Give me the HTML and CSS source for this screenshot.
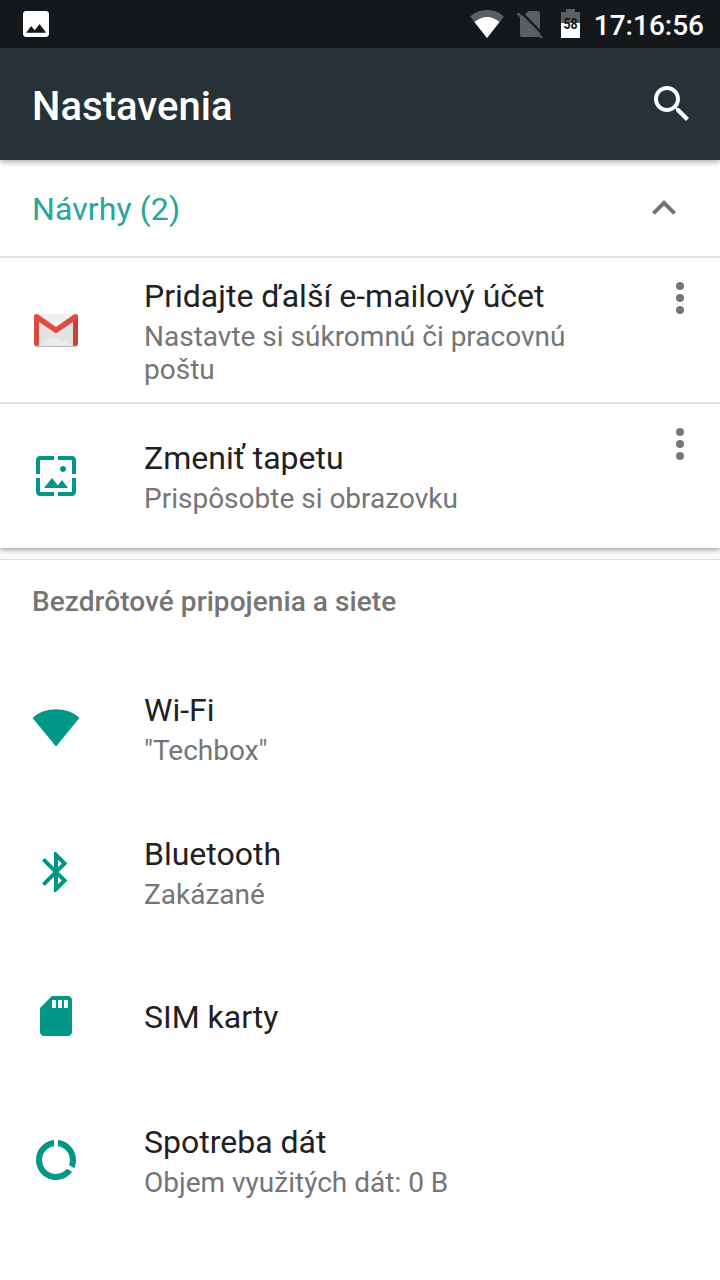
FILE: index.html
```html
<!DOCTYPE html>
<html lang="sk">
<head>
    <meta charset="UTF-8">
    <meta name="viewport" content="width=device-width, initial-scale=1.0">
    <title>Nastavenia</title>
    <link rel="stylesheet" href="styles.css">
</head>
<body>
    <div class="status-bar">
        <svg class="status-image" viewBox="3 3 18 18"><path fill="#fff" d="M21 19V5c0-1.100-.9-2-2-2H5c-1.100 0-2 .9-2 2v14c0 1.100.9 2 2 2h14c1.100 0 2-.9 2-2zM8.600 13.400l2.500 3 3.400-4.400 4.500 6H5.200z"/></svg>
        <div class="status-icons">
            <svg width="34" height="28" viewBox="0 0 34 28">
                <path fill="#5c5e60" d="M17 28L0 6.500C5 2 11 0 17 0s12 2 17 6.500z"/>
                <path fill="#fff" d="M17 28L4.500 12C8 9 12.500 7 17 7s9 2 12.500 5z"/>
            </svg>
            <svg class="status-sim" width="26" height="28" viewBox="0 0 26 28">
                <path fill="#5c5e60" d="M11.500 0H21Q23 0 23 2v22Q23 26 21 26H5Q3 26 3 24V4.500L7.500 4z"/>
                <path stroke="#14181b" stroke-width="2.300" d="M2 -1L28 25.300"/>
                <path stroke="#5c5e60" stroke-width="2.300" d="M.8 2.300L25 27"/>
            </svg>
            <div class="battery">
                <svg width="19" height="29" viewBox="0 0 19 29">
                    <path fill="#5c5e60" d="M5 0h9v3h5v11H0V3h5z"/>
                    <path fill="#fff" d="M0 14h19v15H0z"/>
                </svg>
                <span>58</span>
            </div>
        </div>
        <span class="clock">17:16:56</span>
    </div>

    <header class="app-bar">
        <h1>Nastavenia</h1>
        <svg class="icon" viewBox="0 0 24 24"><path fill="#fff" d="M15.500 14h-.79l-.28-.27C15.410 12.590 16 11.110 16 9.500 16 5.910 13.090 3 9.500 3S3 5.910 3 9.500 5.910 16 9.500 16c1.610 0 3.090-.59 4.230-1.570l.27.28v.79l5 4.990L20.490 19l-4.990-5zm-6 0C7.010 14 5 11.990 5 9.500S7.010 5 9.500 5 14 7.010 14 9.500 11.990 14 9.500 14z"/></svg>
    </header>

    <section class="suggestions">
        <div class="suggestions-header">
            <h2>Návrhy (2)</h2>
            <svg class="icon gray" viewBox="0 0 24 24"><path d="M12 8l-6 6 1.410 1.410L12 10.830l4.590 4.580L18 14z"/></svg>
        </div>
        <div class="item bordered">
            <svg class="icon" viewBox="0 0 48 48">
                <path fill="#b8b8b8" d="M3 38h42v1.500q0 1.500-2 1.500H4.500q-1.500 0-1.500-1.500z"/>
                <path fill="#f0f0f0" d="M4 8h40v31.800H4z"/>
                <path fill="#e2e2e2" d="M7 17l17 12 17-12v22.800H7z"/>
                <path fill="#ececec" d="M7 39.800l12-9 5 1 17 8z"/>
                <path fill="#d54b3d" d="M2 10h5v29.800H4q-2 0-2-2z"/>
                <path fill="#c94132" d="M41 10h5v27.800q0 2-2 2h-3z"/>
                <path fill="#e04d40" d="M2 10.500Q2 8 4.500 8q1 0 2 .8L24 21 41.500 8.800q1-.8 2-.8Q46 8 46 10.500q0 2-1.200 2.900L24 27.500 3.200 13.400Q2 12.500 2 10.500z"/>
            </svg>
            <div class="item-text">
                <h3>Pridajte ďalší e-mailový účet</h3>
                <p>Nastavte si súkromnú či pracovnú poštu</p>
            </div>
            <svg class="icon gray more" viewBox="0 0 24 24"><circle cx="12" cy="6" r="2"/><circle cx="12" cy="12" r="2"/><circle cx="12" cy="18" r="2"/></svg>
        </div>
        <div class="item bordered">
            <svg class="icon teal" viewBox="0 0 24 24"><path d="M4 4h7V2H4c-1.100 0-2 .9-2 2v7h2V4zm6 9l-4 5h12l-3-4-2.030 2.710L10 13zm7-4.500c0-.83-.67-1.500-1.500-1.500S14 7.670 14 8.500s.67 1.500 1.500 1.500S17 9.330 17 8.500zM20 2h-7v2h7v7h2V4c0-1.100-.9-2-2-2zm0 18h-7v2h7c1.100 0 2-.9 2-2v-7h-2v7zM4 13H2v7c0 1.100.9 2 2 2h7v-2H4v-7z"/></svg>
            <div class="item-text">
                <h3>Zmeniť tapetu</h3>
                <p>Prispôsobte si obrazovku</p>
            </div>
            <svg class="icon gray more" viewBox="0 0 24 24"><circle cx="12" cy="6" r="2"/><circle cx="12" cy="12" r="2"/><circle cx="12" cy="18" r="2"/></svg>
        </div>
    </section>

    <section class="category">
        <h2>Bezdrôtové pripojenia a siete</h2>
        <div class="item">
            <svg class="icon teal" viewBox="0 0 48 48"><path d="M24 42.500L.6 14C7 8 15.500 5.300 24 5.300S41 8 47.400 14z"/></svg>
            <div class="item-text">
                <h3>Wi-Fi</h3>
                <p>"Techbox"</p>
            </div>
        </div>
        <div class="item">
            <svg class="icon teal" viewBox="0 0 24 24"><path d="M17.710 7.710L12 2h-1v7.590L6.410 5 5 6.410 10.590 12 5 17.590 6.410 19 11 14.410V22h1l5.710-5.710-4.300-4.290 4.300-4.290zM13 5.830l1.880 1.880L13 9.590V5.830zm1.880 10.460L13 18.170v-3.760l1.880 1.880z"/></svg>
            <div class="item-text">
                <h3>Bluetooth</h3>
                <p>Zakázané</p>
            </div>
        </div>
        <div class="item">
            <svg class="icon teal" viewBox="0 0 24 24"><path d="M18 2h-8L4.020 8 4 20c0 1.100.9 2 2 2h12c1.100 0 2-.9 2-2V4c0-1.100-.9-2-2-2zm-6 6h-2V4h2v4zm3 0h-2V4h2v4zm3 0h-2V4h2v4z"/></svg>
            <div class="item-text">
                <h3>SIM karty</h3>
            </div>
        </div>
        <div class="item">
            <svg class="icon teal" viewBox="0 0 24 24"><path d="M13 2.050v3.030c3.390.49 6 3.390 6 6.920 0 .9-.18 1.750-.48 2.540l2.600 1.530c.56-1.240.88-2.620.88-4.070 0-5.180-3.950-9.450-9-9.950zM12 19c-3.870 0-7-3.130-7-7 0-3.530 2.610-6.430 6-6.920V2.050c-5.060.5-9 4.760-9 9.950 0 5.520 4.470 10 9.990 10 3.310 0 6.240-1.610 8.060-4.090l-2.600-1.530C16.170 17.980 14.210 19 12 19z"/></svg>
            <div class="item-text">
                <h3>Spotreba dát</h3>
                <p>Objem využitých dát: 0 B</p>
            </div>
        </div>
    </section>
</body>
</html>
```
FILE: styles.css
```css
* {
    box-sizing: border-box;
}
body {
    margin: 0;
    height: 1280px;
    overflow: hidden;
    background: #fafafa;
    font-family: Roboto, sans-serif;
    color: #212121;
}
h1, h2, h3, p {
    margin: 0;
    font-weight: 400;
}
svg {
    display: block;
    flex-shrink: 0;
}
.icon {
    width: 48px;
    height: 48px;
}
.teal {
    fill: #009688;
}
.gray {
    fill: #757575;
}

.status-bar {
    display: flex;
    align-items: center;
    height: 48px;
    padding: 0 16px 0 23px;
    background: #14181b;
    color: #fff;
}
.status-image {
    width: 26px;
    height: 26px;
}
.status-icons {
    display: flex;
    gap: 13px;
    margin-left: auto;
}
.status-sim {
    margin-top: 1px;
}
.battery {
    position: relative;
    margin: -1px 0 0 5px;
}
.battery span {
    position: absolute;
    top: 8px;
    left: 0;
    width: 19px;
    font-size: 15px;
    line-height: 15px;
    font-weight: 700;
    text-align: center;
    color: #14181b;
    transform: scaleX(0.82);
}
.clock {
    margin: 2px 0 0 14px;
    font-size: 28px;
    font-weight: 500;
}

.app-bar {
    position: relative;
    display: flex;
    align-items: center;
    justify-content: space-between;
    height: 112px;
    padding: 0 24px 0 32px;
    background: #263238;
    color: #fff;
    box-shadow: 0 2px 6px rgba(0, 0, 0, 0.35);
}
.app-bar h1 {
    padding-top: 4px;
    font-size: 40px;
    font-weight: 500;
    letter-spacing: 0.05px;
}

.suggestions {
    background: #fff;
    box-shadow: 0 2px 5px rgba(0, 0, 0, 0.35);
}
.suggestions-header {
    display: flex;
    align-items: center;
    justify-content: space-between;
    height: 96px;
    padding: 0 32px;
}
.suggestions-header h2 {
    padding-top: 2px;
    font-size: 32px;
    letter-spacing: 0.1px;
    color: #26a69a;
}

.item {
    display: flex;
    align-items: center;
    height: 144px;
    padding: 0 16px 0 32px;
}
.item.bordered {
    height: 146px;
    border-top: 2px solid #e0e0e0;
}
.item-text {
    flex: 1;
    margin-left: 64px;
    padding-right: 64px;
}
.item h3 {
    font-size: 32px;
    line-height: 42px;
}
.item h3:only-child {
    padding-top: 2px;
}
.item p {
    padding-top: 3px;
    font-size: 28px;
    line-height: 33px;
    color: #757575;
}
.more {
    align-self: flex-start;
    margin-top: 16px;
}

.category {
    height: 721px;
    margin-top: 11px;
    border-top: 1px solid #e0e0e0;
    background: #fff;
}
.category h2 {
    height: 96px;
    padding-top: 25px;
    padding-left: 32px;
    font-size: 28px;
    font-weight: 500;
    line-height: 33px;
    letter-spacing: 0.07px;
    color: #757575;
}
```
